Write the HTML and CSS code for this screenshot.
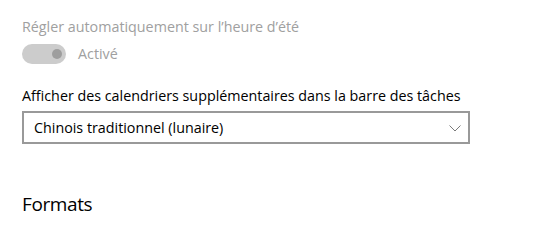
FILE: index.html
```html
<!DOCTYPE html>
<html lang="fr">
<head>
<meta charset="utf-8">
<title>Date et heure</title>
<link rel="stylesheet" href="styles.css">
</head>
<body>
<div class="page">
  <div class="label label-disabled">Régler automatiquement sur l’heure d’été</div>
  <div class="toggle-row">
    <span class="toggle"><span class="knob"></span></span>
    <span class="toggle-text">Activé</span>
  </div>
  <div class="label label-main">Afficher des calendriers supplémentaires dans la barre des tâches</div>
  <div class="select">
    <span class="select-text">Chinois traditionnel (lunaire)</span>
    <svg class="chevron" width="12" height="7" viewBox="0 0 12 7"><path d="M0.5 0.5 L6 6 L11.5 0.5" fill="none" stroke="#7a7a7a" stroke-width="1"/></svg>
  </div>
  <h2 class="heading">Formats</h2>
</div>
</body>
</html>
```
FILE: styles.css
```css
html, body {
  margin: 0;
  padding: 0;
  background: #ffffff;
}
body {
  font-family: "Open Sans", "Noto Sans", sans-serif;
  font-size: 14.3px;
  color: #000000;
}
.page {
  padding: 17px 0 0 22px;
  display: flex;
  flex-direction: column;
  align-items: flex-start;
}
.label {
  line-height: 20px;
  white-space: nowrap;
}
.label-disabled {
  color: #a0a0a0;
}
.toggle-row {
  margin-top: 7px;
  display: flex;
  align-items: center;
  gap: 12px;
  height: 20px;
}
.toggle {
  width: 44px;
  height: 20px;
  border-radius: 10px;
  background: #cccccc;
  display: flex;
  align-items: center;
  justify-content: flex-end;
  padding-right: 4px;
  box-sizing: border-box;
}
.knob {
  width: 10px;
  height: 10px;
  border-radius: 50%;
  background: #9e9e9e;
}
.toggle-text {
  color: #a0a0a0;
  line-height: 20px;
}
.label-main {
  margin-top: 22px;
}
.select {
  margin-top: 5px;
  width: 448px;
  height: 33px;
  box-sizing: border-box;
  border: 2px solid #999999;
  display: flex;
  align-items: center;
  justify-content: space-between;
  padding: 0 7px 0 10px;
}
.select-text {
  line-height: 20px;
}
.chevron {
  display: block;
  margin-top: 1px;
}
.heading {
  margin: 46px 0 0 0;
  font-size: 19px;
  letter-spacing: -0.4px;
  font-weight: 400;
  line-height: 28px;
}
```
